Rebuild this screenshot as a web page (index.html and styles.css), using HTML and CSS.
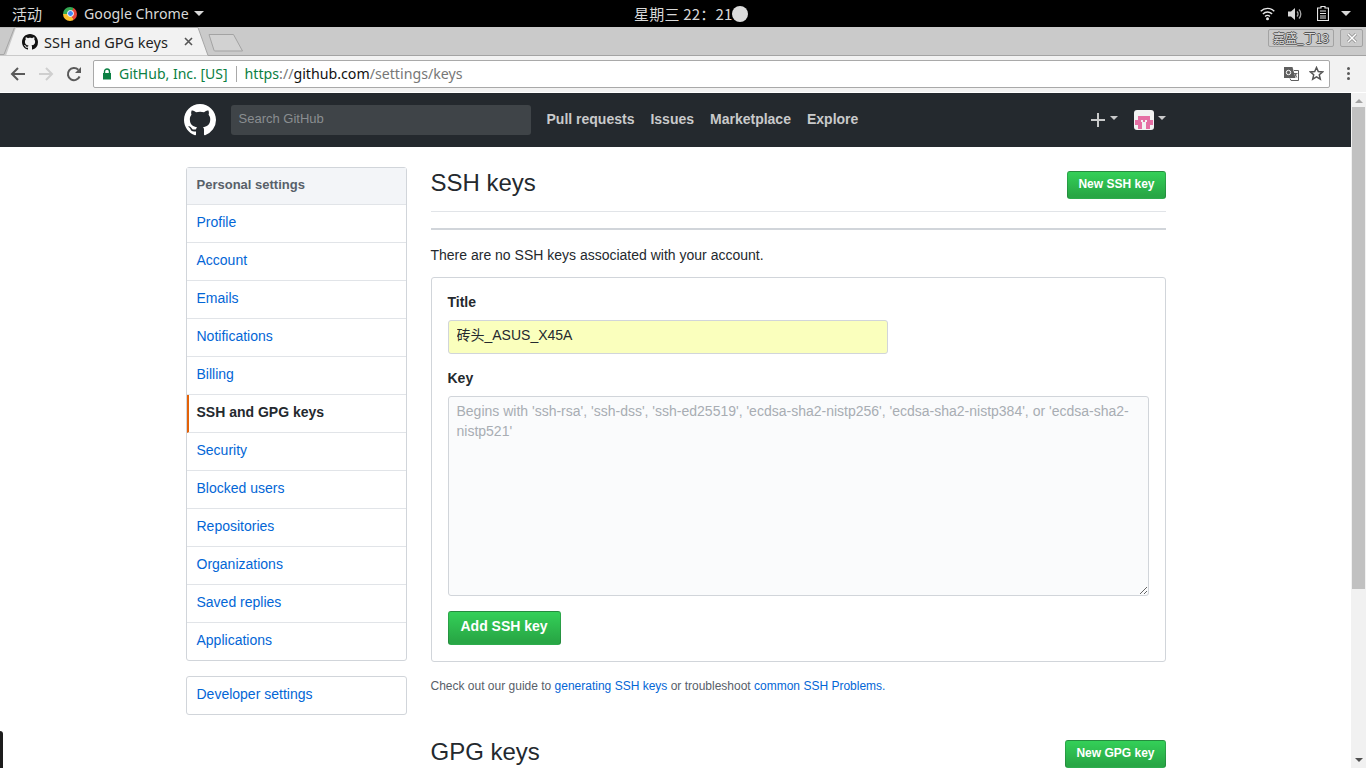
FILE: index.html
```html
<!DOCTYPE html>
<html lang="zh-CN">
  <head>
    <meta charset="UTF-8" />
    <title>SSH and GPG keys</title>
    <link rel="stylesheet" href="styles.css">
  </head>
  <body>
    <!-- desktop top bar -->
    <div class="topbar">
      <div class="topbar_left">
        <span class="activities">活动</span>
        <span class="chrome_logo"><span></span></span>
        <span class="app_name">Google Chrome</span>
        <span class="caret caret_top"></span>
      </div>
      <div class="clock">星期三 22：21<span class="clock_dot"></span></div>
      <div class="tray">
        <svg width="15" height="15" viewBox="0 0 15 15"><path d="M.7 5.200a9.700 9.700 0 0 1 13.600 0M2.900 7.900a6.500 6.500 0 0 1 9.200 0M5.100 10.400a3.300 3.300 0 0 1 4.800 0" fill="none" stroke="#e6e6e6" stroke-width="1.400"/><circle cx="7.500" cy="12.800" r="1.500" fill="#e6e6e6"/></svg>
        <svg class="tray_sound" width="16" height="14" viewBox="0 0 16 14"><path d="M1 4.500h3L8 1v12L4 9.500H1z" fill="#d8d8d8"/><path d="M10 4.500a3.500 3.500 0 0 1 0 5M12 2.500a6.500 6.500 0 0 1 0 9" fill="none" stroke="#a8a8a8" stroke-width="1.300"/></svg>
        <svg width="12" height="15" viewBox="0 0 12 15"><path d="M4 .5h4v1.500h3.500v12.500H.5V2H4z" fill="none" stroke="#e6e6e6" stroke-width="1.200"/><path d="M3 5h6M3 7.500h6M3 10h6M3 12h6" stroke="#e6e6e6" stroke-width="1.200"/></svg>
        <span class="caret caret_tray"></span>
      </div>
    </div>

    <!-- browser tabs -->
    <div class="tabstrip">
      <div class="tab">
        <svg class="tab_shape" width="212" height="29" viewBox="0 0 212 29"><path d="M0 .5h198l10 28H0z" fill="#f2f2f2"/><path d="M0 .5h198l10 28" fill="none" stroke="#a6a6a6"/><path d="M16 .5L6 28.500H0V.500z" fill="#cacaca"/><path d="M0 27.500h4L14.500 .5" fill="none" stroke="#a6a6a6"/></svg>
        <svg class="tab_icon" width="16" height="16" viewBox="0 0 16 16"><path fill="#111" d="M8 0C3.580 0 0 3.580 0 8c0 3.540 2.290 6.530 5.470 7.590.4.070.55-.17.55-.38 0-.19-.01-.82-.01-1.490-2.010.37-2.530-.49-2.690-.94-.09-.23-.48-.94-.82-1.130-.28-.15-.68-.52-.01-.53.63-.01 1.080.58 1.230.82.720 1.210 1.870.87 2.330.66.070-.52.280-.87.510-1.070-1.780-.2-3.640-.89-3.640-3.950 0-.87.310-1.590.820-2.150-.080-.2-.360-1.020.080-2.120 0 0 .670-.21 2.200.82.640-.18 1.320-.27 2-.27.680 0 1.360.09 2 .27 1.530-1.040 2.200-.82 2.200-.82.440 1.100.160 1.920.080 2.120.510.560.820 1.270.820 2.150 0 3.070-1.870 3.750-3.650 3.950.290.250.540.730.540 1.480 0 1.070-.010 1.930-.010 2.200 0 .210.150.460.550.380A8.013 8.013 0 0 0 16 8c0-4.420-3.580-8-8-8z"/></svg>
        <span class="tab_title">SSH and GPG keys</span>
        <svg class="tab_close" width="9" height="9" viewBox="0 0 9 9"><path d="M1 1l7 7M8 1L1 8" stroke="#555" stroke-width="1.600"/></svg>
      </div>
      <svg class="newtab" width="36" height="18" viewBox="0 0 36 18"><path d="M1 .5h24.500L34.500 17H7a1 1 0 0 1-1-.7z" fill="#d2d2d2" stroke="#a3a3a3"/></svg>
      <div class="profile">嘉盛_丁13</div>
      <div class="win_close"><svg width="12" height="12" viewBox="0 0 12 12"><path d="M2 2l8 8M10 2l-8 8" stroke="#8a8a8a" stroke-width="3"/><path d="M2 2l8 8M10 2l-8 8" stroke="#fff" stroke-width="1.500"/></svg></div>
    </div>

    <!-- browser toolbar -->
    <div class="toolbar">
      <svg class="tool_icon" width="16" height="16" viewBox="0 0 16 16"><path d="M15 8H2.500M8 2L2 8l6 6" fill="none" stroke="#5a5a5a" stroke-width="2"/></svg>
      <svg class="tool_icon" width="16" height="16" viewBox="0 0 16 16"><path d="M1 8h12.500M8 2l6 6-6 6" fill="none" stroke="#cfcfcf" stroke-width="2"/></svg>
      <svg class="tool_icon" width="16" height="16" viewBox="0 0 16 16"><path d="M13.600 10.500A6.100 6.100 0 1 1 12.300 3.700" fill="none" stroke="#5a5a5a" stroke-width="2"/><path d="M15 1v6H9z" fill="#5a5a5a"/></svg>
      <div class="omnibox">
        <svg class="lock" width="10" height="12" viewBox="0 0 10 12"><path d="M2.500 5V3.500a2.500 2.500 0 0 1 5 0V5" fill="none" stroke="#0b8043" stroke-width="1.400"/><rect x="1" y="5" width="8" height="6.500" fill="#0b8043"/></svg>
        <span class="ev_name">GitHub, Inc. [US]</span>
        <span class="omni_sep"></span>
        <span class="url"><span class="url_scheme">https</span><span class="url_path">://</span><span class="url_host">github.com</span><span class="url_path">/settings/keys</span></span>
        <svg class="translate" width="15" height="15" viewBox="0 0 15 15"><path d="M0 1h9l1.500 3H15v11H6l-1-3H0z" fill="#fff"/><path d="M0 1h8.500l3 11H0z" fill="#5f5f5f"/><path d="M6 12.500l1 2h7.500V4.500H10" fill="none" stroke="#5f5f5f"/><circle cx="4.500" cy="6.500" r="2.200" fill="none" stroke="#fff"/><path d="M9.500 7.500h4M11 7.500l1.800 4M12.500 7.500l-2 3.500" fill="none" stroke="#5f5f5f" stroke-width=".9"/></svg>
        <svg class="star" width="15" height="15" viewBox="0 0 15 15"><path d="M7.500 1.500l1.800 4 4.300.4-3.300 2.900 1 4.300-3.800-2.300-3.800 2.300 1-4.300L1.400 5.900l4.300-.4z" fill="none" stroke="#555" stroke-width="1.500"/></svg>
      </div>
      <div class="chrome_menu"><i></i><i></i><i></i></div>
    </div>

    <div class="viewport">
      <div class="page">
        <header class="gh_header">
          <svg class="gh_logo" width="32" height="32" viewBox="0 0 16 16"><path fill="#fff" d="M8 0C3.580 0 0 3.580 0 8c0 3.540 2.290 6.530 5.470 7.590.4.070.55-.17.55-.38 0-.19-.01-.82-.01-1.490-2.010.37-2.530-.49-2.690-.94-.09-.23-.48-.94-.82-1.130-.28-.15-.68-.52-.01-.53.63-.01 1.080.58 1.230.82.720 1.210 1.870.87 2.330.66.070-.52.280-.87.510-1.070-1.780-.2-3.640-.89-3.640-3.950 0-.87.310-1.590.820-2.150-.080-.2-.360-1.020.080-2.120 0 0 .670-.21 2.200.82.640-.18 1.320-.27 2-.27.680 0 1.360.09 2 .27 1.530-1.040 2.200-.82 2.200-.82.440 1.100.160 1.920.080 2.120.510.560.820 1.270.820 2.150 0 3.070-1.870 3.750-3.650 3.950.290.250.540.730.540 1.480 0 1.070-.010 1.930-.010 2.200 0 .210.150.460.550.380A8.013 8.013 0 0 0 16 8c0-4.420-3.580-8-8-8z"/></svg>
          <div class="gh_search">Search GitHub</div>
          <nav class="gh_nav">
            <a>Pull requests</a>
            <a>Issues</a>
            <a>Marketplace</a>
            <a>Explore</a>
          </nav>
          <div class="gh_right">
            <svg class="plus" width="14" height="14" viewBox="0 0 14 14"><path d="M7 0v14M0 7h14" stroke="#c9cacb" stroke-width="2"/></svg>
            <span class="caret caret_gh"></span>
            <svg class="avatar" width="20" height="20" viewBox="0 0 20 20"><rect width="20" height="20" rx="3" fill="#f2f2f2"/><path d="M4 6h12v4h3v5h-3v4h-4v-7H8v7H4v-4H1v-5h3z" fill="#e56fa4"/><path d="M7 10h2v2H7zM11 10h2v2h-2zM9 13h2v5H9z" fill="#f2f2f2"/></svg>
            <span class="caret caret_gh"></span>
          </div>
        </header>

        <div class="container">
          <aside class="sidebar">
            <div class="menu">
              <h3 class="menu_head">Personal settings</h3>
              <a class="menu_item">Profile</a>
              <a class="menu_item">Account</a>
              <a class="menu_item">Emails</a>
              <a class="menu_item">Notifications</a>
              <a class="menu_item">Billing</a>
              <a class="menu_item selected">SSH and GPG keys</a>
              <a class="menu_item">Security</a>
              <a class="menu_item">Blocked users</a>
              <a class="menu_item">Repositories</a>
              <a class="menu_item">Organizations</a>
              <a class="menu_item">Saved replies</a>
              <a class="menu_item">Applications</a>
            </div>
            <div class="menu">
              <a class="menu_item">Developer settings</a>
            </div>
          </aside>

          <main class="content">
            <div class="subhead">
              <h2>SSH keys</h2>
              <a class="btn btn_sm">New SSH key</a>
            </div>
            <div class="listing_rule"></div>
            <p class="no_keys">There are no SSH keys associated with your account.</p>
            <form class="key_form">
              <label for="title">Title</label>
              <input id="title" type="text" value="砖头_ASUS_X45A" />
              <label for="key" class="key_label">Key</label>
              <textarea id="key" placeholder="Begins with 'ssh-rsa', 'ssh-dss', 'ssh-ed25519', 'ecdsa-sha2-nistp256', 'ecdsa-sha2-nistp384', or 'ecdsa-sha2-nistp521'"></textarea>
              <a class="btn btn_lg">Add SSH key</a>
            </form>
            <p class="note">Check out our guide to <a>generating SSH keys</a> or troubleshoot <a>common SSH Problems.</a></p>
            <div class="subhead subhead_gpg">
              <h2>GPG keys</h2>
              <a class="btn btn_sm">New GPG key</a>
            </div>
          </main>
        </div>
      </div>

      <div class="scrollbar">
        <span class="arrow_up"></span>
        <span class="thumb"></span>
        <span class="arrow_down"></span>
      </div>
    </div>

    <div class="dock_edge"></div>
  </body>
</html>
```

FILE: styles.css
```css
* {
  box-sizing: border-box;
  margin: 0;
  padding: 0;
}

html,
body {
  height: 768px;
  overflow: hidden;
}

body {
  display: flex;
  flex-direction: column;
  background-color: #fff;
  color: #24292e;
  font-family: "Liberation Sans", "Noto Sans CJK SC", sans-serif;
  font-size: 14px;
}

.caret {
  display: inline-block;
  width: 0;
  height: 0;
  border-style: solid;
  border-color: transparent;
  border-width: 5px 5px 0 5px;
}

/* desktop top bar */
.topbar {
  display: flex;
  flex: 0 0 27px;
  align-items: center;
  justify-content: space-between;
  padding: 0 15px 0 12px;
  background-color: #000;
  color: #d8d8d8;
  font-family: "Noto Sans", "Noto Sans CJK SC", sans-serif;
  font-size: 14px;
  position: relative;
}

.topbar_left {
  display: flex;
  align-items: center;
}

.activities {
  font-family: "Noto Sans CJK SC", sans-serif;
  font-size: 15px;
  margin-right: 21px;
}

.chrome_logo {
  display: flex;
  align-items: center;
  justify-content: center;
  width: 14px;
  height: 14px;
  border-radius: 50%;
  background: conic-gradient(from 30deg, #e8453c 0 120deg, #fbc02d 120deg 240deg, #34a853 240deg 360deg);
}

.chrome_logo span {
  width: 7px;
  height: 7px;
  border: 1px solid #fff;
  border-radius: 50%;
  background-color: #4285f4;
}

.app_name {
  margin-left: 7px;
  font-size: 14.2px;
}

.caret_top {
  margin-left: 5px;
  border-top-color: #d8d8d8;
}

.clock {
  display: flex;
  align-items: center;
  position: absolute;
  left: 634px;
  top: 0;
  height: 27px;
  font-family: "Noto Sans CJK SC", sans-serif;
  font-size: 15px;
  letter-spacing: 0.2px;
}

.clock_dot {
  width: 16px;
  height: 16px;
  border-radius: 50%;
  background-color: #dcdcdc;
}

.tray {
  display: flex;
  align-items: center;
  gap: 12px;
}

.tray_sound {
  margin-right: 2px;
}

.caret_tray {
  border-top-color: #d8d8d8;
}

/* browser tabs */
.tabstrip {
  display: flex;
  flex: 0 0 29px;
  position: relative;
  background-color: #cacaca;
  border-bottom: 1px solid #a3a3a3;
}

.tab {
  display: flex;
  align-items: center;
  position: relative;
  width: 208px;
  height: 29px;
  margin-bottom: -1px;
  padding-left: 22px;
}

.tab_shape {
  position: absolute;
  left: 0;
  top: 0;
}

.tab_icon,
.tab_title,
.tab_close {
  position: relative;
}

.tab_title {
  margin-left: 6px;
  font-family: "Noto Sans", sans-serif;
  font-size: 14.5px;
  color: #222;
}

.tab_close {
  margin-left: 16px;
}

.newtab {
  margin: 7px 0 0 0;
}

.profile {
  position: absolute;
  left: 1268px;
  top: 2px;
  width: 66px;
  height: 18px;
  border: 1px solid #a3a3a3;
  border-radius: 2px;
  color: #dcdcdc;
  font-family: "Noto Sans CJK SC", sans-serif;
  font-size: 12px;
  line-height: 16px;
  text-align: center;
  text-shadow: 1px 0 0 #555, -1px 0 0 #555, 0 1px 0 #555, 0 -1px 0 #555;
}

.win_close {
  display: flex;
  align-items: center;
  justify-content: center;
  position: absolute;
  left: 1340px;
  top: 2px;
  width: 23px;
  height: 18px;
  border: 1px solid #a3a3a3;
  border-radius: 2px;
}

/* browser toolbar */
.toolbar {
  display: flex;
  flex: 0 0 37px;
  align-items: center;
  padding: 0 16px 1px 10px;
  background-color: #f2f2f2;
  border-bottom: 1px solid #fff;
}

.tool_icon {
  margin-right: 12px;
}

.toolbar .tool_icon:nth-child(3) {
  margin-right: 11px;
}

.omnibox {
  display: flex;
  align-items: center;
  flex: 1;
  height: 28px;
  padding: 0 5px 0 8px;
  background-color: #fff;
  border: 1px solid #a9a9a9;
  border-radius: 2px;
  font-family: "Noto Sans", sans-serif;
  font-size: 14px;
}

.ev_name {
  margin-left: 7px;
  color: #0b8043;
}

.omni_sep {
  width: 1px;
  height: 16px;
  margin: 0 8px;
  background-color: #a9a9a9;
}

.url {
  flex: 1;
  font-size: 14.2px;
  white-space: nowrap;
}

.url_scheme {
  color: #0b8043;
}

.url_path {
  color: #777;
}

.url_host {
  color: #111;
}

.star {
  margin-left: 10px;
}

.chrome_menu {
  display: flex;
  flex-direction: column;
  gap: 2px;
  margin-left: 17px;
}

.chrome_menu i {
  width: 3px;
  height: 3px;
  border-radius: 50%;
  background-color: #5a5a5a;
}

/* page area */
.viewport {
  display: flex;
  flex: 1;
  min-height: 0;
}

.page {
  flex: 1;
  overflow: hidden;
}

.gh_header {
  display: flex;
  align-items: center;
  height: 54px;
  padding: 0 185px 0 184px;
  background-color: #24292e;
}

.gh_search {
  width: 300px;
  height: 30px;
  margin-left: 15px;
  padding-left: 7.5px;
  background-color: #3f4448;
  border-radius: 3px;
  color: #8a8e91;
  font-size: 13px;
  line-height: 27px;
}

.gh_nav {
  display: flex;
  gap: 16px;
  margin-left: 15.5px;
  margin-bottom: 2px;
}

.gh_nav a {
  color: #c9cacb;
  font-weight: bold;
}

.gh_right {
  display: flex;
  align-items: center;
  margin-left: auto;
}

.caret_gh {
  margin-left: 5px;
  margin-bottom: 4px;
  border-width: 4px 4px 0 4px;
  border-top-color: #c9cacb;
}

.avatar {
  margin-left: 16px;
  margin-right: -1px;
}

.container {
  display: flex;
  width: 980px;
  margin: 20px auto 0;
}

.sidebar {
  flex: 0 0 221px;
  margin-right: 24px;
}

.menu {
  margin-bottom: 15px;
  border: 1px solid #d1d5da;
  border-radius: 3px;
}

.menu_head {
  height: 37px;
  padding-left: 10px;
  background-color: #f3f5f8;
  border-bottom: 1px solid #e1e4e8;
  color: #586069;
  font-size: 13px;
  line-height: 34px;
}

.menu_item {
  display: block;
  height: 38px;
  padding-left: 10px;
  border-bottom: 1px solid #e1e4e8;
  color: #0366d6;
  line-height: 34px;
}

.menu_item:last-child {
  height: 37px;
  border-bottom: none;
}

.menu_item.selected {
  padding-left: 8px;
  border-left: 2px solid #e36209;
  color: #24292e;
  font-weight: bold;
}

.content {
  flex: 1;
}

.subhead {
  display: flex;
  align-items: flex-start;
  justify-content: space-between;
  height: 45px;
  padding-top: 4px;
  border-bottom: 1px solid #e1e4e8;
}

.subhead h2 {
  font-size: 24px;
  font-weight: normal;
  line-height: 24px;
}

.listing_rule {
  height: 2px;
  margin-top: 16px;
  background-color: #d1d5da;
}

.no_keys {
  margin-top: 15px;
  line-height: 20px;
}

.key_form {
  height: 385px;
  margin-top: 12px;
  padding: 15px 16px 16px;
  border: 1px solid #d1d5da;
  border-radius: 3px;
}

.key_form label {
  display: block;
  font-weight: bold;
  line-height: 18px;
}

.key_form input {
  display: block;
  width: 440px;
  height: 34px;
  margin-top: 9px;
  padding: 0 8px 6px;
  background-color: #faffbd;
  border: 1px solid #d1d5da;
  border-radius: 3px;
  color: #24292e;
  font-family: "Liberation Sans", "Noto Sans CJK SC", sans-serif;
  font-size: 14px;
}

.key_form .key_label {
  margin-top: 15px;
}

.key_form textarea {
  display: block;
  width: 701px;
  height: 200px;
  margin-top: 9px;
  padding: 4px 8px;
  background-color: #fafbfc;
  border: 1px solid #d1d5da;
  border-radius: 3px;
  font-family: "Liberation Sans", sans-serif;
  font-size: 14px;
  line-height: 20px;
}

.key_form textarea::placeholder {
  color: #a8adb3;
}

.btn {
  display: inline-block;
  background-image: linear-gradient(-180deg, #34d058 0%, #28a745 90%);
  border: 1px solid rgba(27, 31, 35, 0.2);
  border-radius: 3px;
  color: #fff;
  font-weight: bold;
}

.btn_sm {
  height: 28px;
  padding: 0 10px;
  font-size: 12px;
  line-height: 24px;
}

.btn_lg {
  height: 34px;
  margin-top: 15px;
  padding: 0 12px;
  line-height: 28px;
}

.note {
  margin-top: 16px;
  color: #586069;
  font-size: 12px;
  line-height: 16px;
}

.note a {
  color: #0366d6;
}

.subhead_gpg {
  margin-top: 42px;
}

/* fake scrollbar */
.scrollbar {
  display: flex;
  flex: 0 0 15px;
  flex-direction: column;
  align-items: center;
  background-color: #f1f1f1;
  position: relative;
}

.arrow_up,
.arrow_down {
  width: 0;
  height: 0;
  border-style: solid;
  border-color: transparent;
}

.arrow_up {
  margin-top: 6px;
  border-width: 0 4px 4px 4px;
  border-bottom-color: #a3a3a3;
}

.thumb {
  width: 13px;
  height: 482px;
  margin-top: 4px;
  background-color: #c1c1c1;
}

.arrow_down {
  margin-top: auto;
  margin-bottom: 6px;
  border-width: 4px 4px 0 4px;
  border-top-color: #505050;
}

.dock_edge {
  position: absolute;
  left: 0;
  top: 731px;
  width: 3px;
  height: 37px;
  background-color: #1c1c1c;
  border-top-right-radius: 3px;
}
```
